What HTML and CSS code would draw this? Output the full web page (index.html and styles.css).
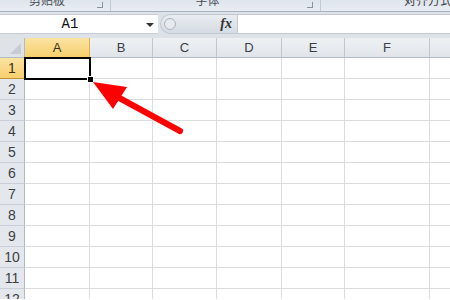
FILE: index.html
```html
<!DOCTYPE html>
<html lang="zh">
<head>
  <meta charset="UTF-8" />
  <title>工作表</title>
  <link rel="stylesheet" href="styles.css">
</head>
<body>
  <!-- 功能区底部（组名） -->
  <div class="ribbon">
    <div class="group g1"><span class="label">剪贴板</span><span class="launcher"></span></div>
    <div class="group g2"><span class="label">字体</span><span class="launcher"></span></div>
    <div class="group g3"><span class="label">对齐方式</span></div>
  </div>

  <!-- 编辑栏 -->
  <div class="fbar">
    <div class="namebox">
      <span class="cellref">A1</span>
      <span class="drop"></span>
    </div>
    <div class="btns">
      <span class="grip"></span>
      <span class="fx">fx</span>
    </div>
    <div class="input"></div>
  </div>

  <!-- 工作表 -->
  <div class="sheet">
    <div class="grid" id="grid">
      <div class="corner"><span class="tri"></span></div>
      <div class="colhead sel">A</div>
      <div class="colhead">B</div>
      <div class="colhead">C</div>
      <div class="colhead">D</div>
      <div class="colhead">E</div>
      <div class="colhead">F</div>
      <div class="colhead"></div>
    </div>

    <div class="selection"><span class="handle"></span></div>

    <svg class="arrow" width="450" height="262" viewBox="0 38 450 262">
      <line x1="180" y1="131" x2="112" y2="94" stroke="#ff0000" stroke-width="6" stroke-linecap="round"/>
      <polygon points="93,82 127,87 113,109" fill="#ff0000"/>
    </svg>
  </div>

  <script>
    const grid = document.getElementById('grid');
    for (let r = 1; r <= 12; r++) {
      const h = document.createElement('div');
      h.className = r === 1 ? 'rowhead sel' : 'rowhead';
      h.textContent = r;
      grid.appendChild(h);
      for (let c = 0; c < 7; c++) {
        const cell = document.createElement('div');
        cell.className = 'cell';
        grid.appendChild(cell);
      }
    }
  </script>
</body>
</html>
```

FILE: styles.css
```css
* { box-sizing: border-box; margin: 0; padding: 0; }

body {
  width: 450px;
  height: 300px;
  overflow: hidden;
  background: #fff;
  font-family: "Liberation Sans", Arial, "Noto Sans CJK SC", sans-serif;
}

/* 功能区 */
.ribbon {
  height: 12px;
  display: flex;
  background: linear-gradient(to bottom, #dfe5ec, #e8edf3);
  border-bottom: 1px solid #a8b2bf;
  overflow: hidden;
}

.group {
  display: flex;
  align-items: flex-end;
  justify-content: center;
  position: relative;
  border-right: 1px solid #c3cad4;
  overflow: hidden;
}

.g1 { width: 111px; padding-right: 16px; }
.g2 { width: 210px; padding-right: 16px; }
.g3 { flex: 1; border-right: none; justify-content: flex-end; padding-right: 0; }

.label {
  font-size: 12px;
  line-height: 14px;
  margin-bottom: 3px;
  color: #4a4f57;
}

.g3 .label { color: #3a3f47; margin-right: -2px; }

.launcher {
  position: absolute;
  right: 7px;
  bottom: 3px;
  width: 6px;
  height: 6px;
  border-right: 1px solid #8a929c;
  border-bottom: 1px solid #8a929c;
}

/* 编辑栏 */
.fbar {
  height: 26px;
  display: flex;
  align-items: flex-start;
  background: #dde2e9;
  padding-top: 2px;
}

.namebox {
  width: 158px;
  height: 20px;
  background: #fff;
  border-top: 1px solid #c6ccd5;
  border-bottom: 1px solid #c6ccd5;
  display: flex;
  align-items: center;
  justify-content: center;
  position: relative;
}

.cellref {
  font-family: "Liberation Mono", "DejaVu Sans Mono", monospace;
  font-size: 14px;
  color: #111;
  margin-right: 18px;
}

.drop {
  position: absolute;
  right: 4px;
  top: 8px;
  width: 0;
  height: 0;
  border-left: 4px solid transparent;
  border-right: 4px solid transparent;
  border-top: 4px solid #333;
}

.btns {
  width: 77px;
  height: 20px;
  margin-left: 2px;
  display: flex;
  align-items: center;
  justify-content: flex-end;
  padding-right: 5px;
  background: linear-gradient(to bottom, #e9edf2, #d5dbe3);
  border-radius: 10px 0 0 10px;
  border: 1px solid #c2c9d3;
  border-right: none;
  position: relative;
}

.grip {
  position: absolute;
  left: 3px;
  top: 3px;
  width: 12px;
  height: 12px;
  border-radius: 50%;
  border: 1px solid #aab3be;
  background: #e6eaef;
}

.fx {
  font-family: "Liberation Serif", serif;
  font-style: italic;
  font-weight: bold;
  font-size: 14px;
  color: #333;
}

.input {
  flex: 1;
  height: 20px;
  background: #fff;
  border: 1px solid #c2c9d3;
  border-right: none;
}

/* 工作表 */
.sheet {
  position: relative;
  height: 261px;
  overflow: hidden;
}

.grid {
  display: grid;
  grid-template-columns: 25px 65px 63px 64px 65px 63px 85px 40px;
  grid-template-rows: 20px;
  grid-auto-rows: 21px;
}

.corner {
  background: #dfe3e8;
  border-right: 1px solid #b2bac5;
  border-bottom: 1px solid #b2bac5;
  position: relative;
}

.tri {
  position: absolute;
  right: 3px;
  bottom: 3px;
  width: 0;
  height: 0;
  border-left: 11px solid transparent;
  border-bottom: 11px solid #c5ccd5;
}

.colhead {
  background: linear-gradient(to bottom, #eef1f4, #e1e5ea);
  border-right: 1px solid #c0c7d0;
  border-bottom: 1px solid #b2bac5;
  font-size: 13px;
  color: #3c3f44;
  display: flex;
  align-items: center;
  justify-content: center;
}

.rowhead {
  background: #e4e8ed;
  border-right: 1px solid #b2bac5;
  border-bottom: 1px solid #c8cfd8;
  font-size: 14px;
  color: #3c3f44;
  display: flex;
  align-items: center;
  justify-content: center;
}

.colhead.sel,
.rowhead.sel {
  background: linear-gradient(to bottom, #fbe3a3, #f7cf6e);
  color: #3a3018;
  border-color: #e3b04b #e3b04b #c29133 #e3b04b;
}

.cell {
  border-right: 1px solid #dadcdf;
  border-bottom: 1px solid #dadcdf;
}

.selection {
  position: absolute;
  left: 24px;
  top: 19px;
  width: 67px;
  height: 23px;
  border: 2px solid #000;
}

.handle {
  position: absolute;
  right: -5px;
  bottom: -5px;
  width: 7px;
  height: 7px;
  background: #000;
  border: 1px solid #fff;
}

.arrow {
  position: absolute;
  left: 0;
  top: 0;
  pointer-events: none;
}
```
